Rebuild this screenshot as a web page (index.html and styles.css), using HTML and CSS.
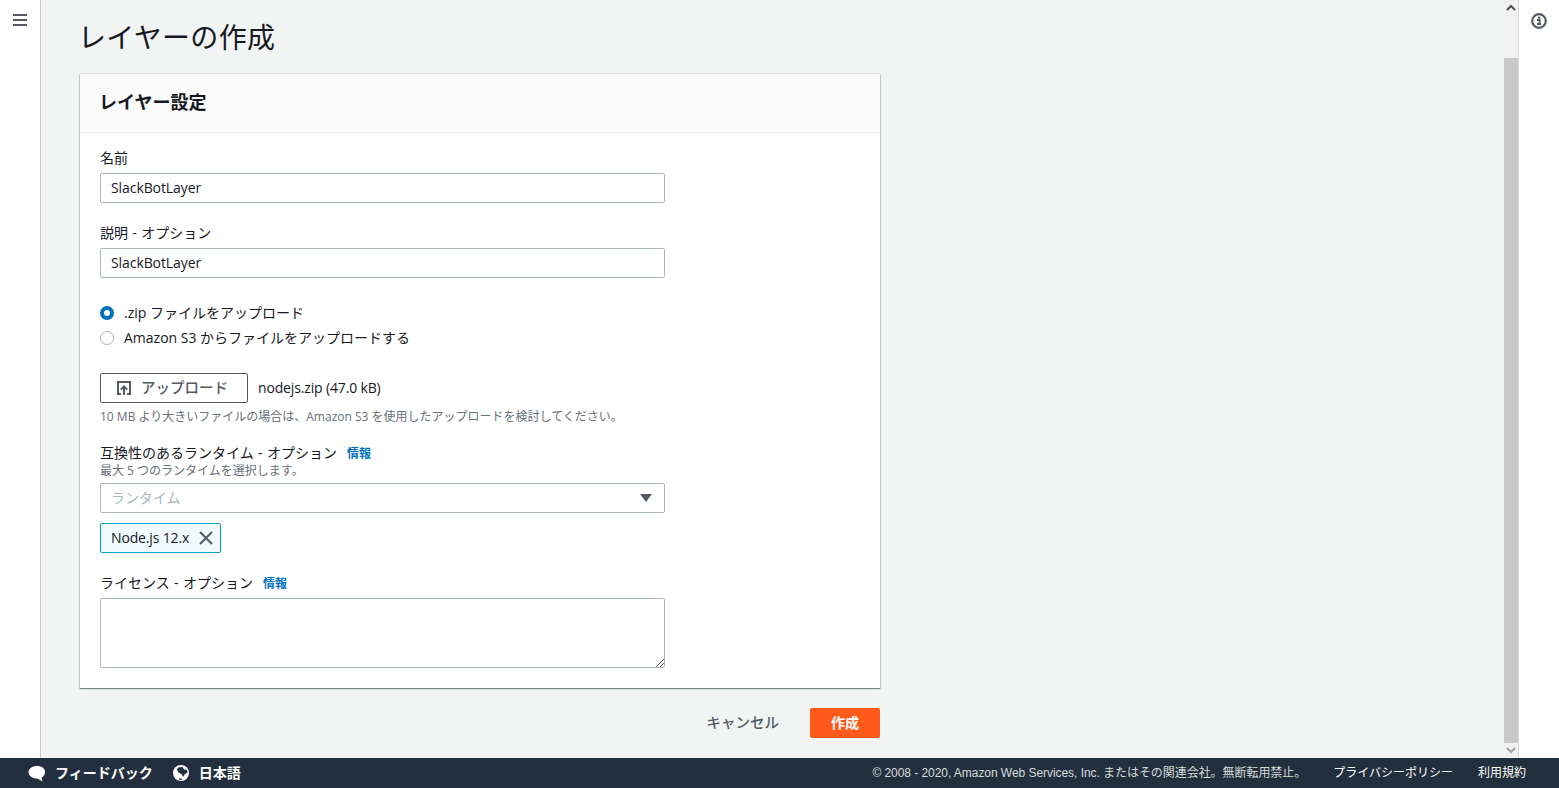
FILE: index.html
```html
<!DOCTYPE html>
<html lang="ja">
<head>
<meta charset="utf-8">
<title>レイヤーの作成</title>
<link rel="stylesheet" href="styles.css">
</head>
<body>
<div class="shell">
  <nav class="nav">
    <svg class="menu-icon" width="16" height="14" viewBox="0 0 16 14"><path d="M1 2h14M1 7h14M1 12h14" stroke="#545b64" stroke-width="2" fill="none"/></svg>
  </nav>
  <main class="main">
    <h1 class="title">レイヤーの作成</h1>
    <section class="card">
      <header class="card-head"><h2 class="card-title">レイヤー設定</h2></header>
      <div class="card-body">
        <div class="label">名前</div>
        <div class="input">SlackBotLayer</div>
        <div class="label label-next">説明 - オプション</div>
        <div class="input">SlackBotLayer</div>
        <div class="radios">
          <div class="radio-row"><span class="radio radio-on"></span><span>.zip ファイルをアップロード</span></div>
          <div class="radio-row"><span class="radio"></span><span>Amazon S3 からファイルをアップロードする</span></div>
        </div>
        <div class="upload-row">
          <div class="upload-btn">
            <svg width="16" height="16" viewBox="0 0 16 16"><path d="M5 14H2V2h12v12h-3" fill="none" stroke="#545b64" stroke-width="2"/><path d="M8 15V7M4.800 9.600 8 6.400l3.200 3.200" fill="none" stroke="#545b64" stroke-width="2"/></svg>
            <span class="upload-text">アップロード</span>
          </div>
          <span class="file-name">nodejs.zip (47.0 kB)</span>
        </div>
        <div class="hint">10 MB より大きいファイルの場合は、Amazon S3 を使用したアップロードを検討してください。</div>
        <div class="label label-runtime">互換性のあるランタイム - オプション<a class="info">情報</a></div>
        <div class="sub">最大 5 つのランタイムを選択します。</div>
        <div class="input select"><span class="placeholder">ランタイム</span><span class="caret"></span></div>
        <div class="token"><span class="token-text">Node.js 12.x</span>
          <svg width="16" height="16" viewBox="0 0 16 16"><path d="M2 2l12 12M14 2 2 14" stroke="#545b64" stroke-width="2" fill="none"/></svg>
        </div>
        <div class="label label-license">ライセンス - オプション<a class="info">情報</a></div>
        <div class="textarea">
          <svg class="grip" width="8" height="8" viewBox="0 0 8 8"><path d="M0 8 8 0M4 8l4-4" stroke="#555" stroke-width="1" fill="none"/></svg>
        </div>
      </div>
    </section>
    <div class="actions">
      <span class="cancel">キャンセル</span>
      <span class="create">作成</span>
    </div>
  </main>
  <div class="scrollbar">
    <div class="scroll-top"><svg width="10" height="7" viewBox="0 0 10 7"><path d="M1 6l4-4 4 4" stroke="#505050" stroke-width="2" fill="none"/></svg></div>
    <div class="thumb"></div>
    <div class="scroll-bottom"><svg width="10" height="7" viewBox="0 0 10 7"><path d="M1 1l4 4 4-4" stroke="#a3a3a3" stroke-width="2" fill="none"/></svg></div>
  </div>
  <aside class="aside">
    <svg width="16" height="16" viewBox="0 0 16 16"><circle cx="8" cy="8" r="6.800" fill="none" stroke="#545b64" stroke-width="2.200"/><path d="M6 7h2.600v3.400M6 11h4.200" fill="none" stroke="#545b64" stroke-width="1.800"/><rect x="7" y="3.600" width="2.200" height="2.200" fill="#545b64"/></svg>
  </aside>
</div>
<footer class="footer">
  <div class="foot-item foot-feedback">
    <svg width="18" height="17" viewBox="0 0 18 16"><path d="M9 .5C4.200.5.500 3.200.500 6.700c0 3.400 3.500 6.100 8 6.200 1.600 0 3 1 5 2.600.800.500 1.200.200.800-.600-.400-.900-.600-2-.500-3 2-1.200 3.200-3.100 3.200-5.200C17.500 3.200 13.800.5 9 .5z" fill="#fff"/></svg>
    <span>フィードバック</span>
  </div>
  <div class="foot-item foot-lang">
    <svg width="16" height="16" viewBox="0 0 16 16"><circle cx="8" cy="8" r="8" fill="#fff"/><path d="M5 2.500 9.500 2l1.500 2.500L14 4.800l.5 2.700-2.500 1.500-2 3-1.500-3-3-1.500-1.500-3zM6 13.500h3v1.200H6z" fill="#232f3e"/></svg>
    <span>日本語</span>
  </div>
  <span class="copyright">© 2008 - 2020, Amazon Web Services, Inc. またはその関連会社。無断転用禁止。</span>
  <span class="foot-link foot-privacy">プライバシーポリシー</span>
  <span class="foot-link foot-terms">利用規約</span>
</footer>
</body>
</html>
```
FILE: styles.css
```css
* { box-sizing: border-box; }
html, body { margin: 0; height: 100%; overflow: hidden; }
body {
  display: flex;
  flex-direction: column;
  width: 1559px;
  height: 788px;
  font-family: "Open Sans", "Noto Sans CJK JP", sans-serif;
  font-size: 14px;
  color: #16191f;
  background: #fff;
}
.shell { display: flex; height: 758px; }
.nav {
  width: 41px;
  flex: none;
  background: #fff;
  border-right: 1px solid #c4cccc;
  padding: 13px 0 0 12px;
}
.menu-icon { display: block; }
.main {
  flex: 1;
  background: #f2f3f3;
  padding: 0 0 0 39px;
  min-width: 0;
}
.title {
  margin: 0;
  height: 74px;
  padding: 16px 0 0 0;
  font-size: 28px;
  line-height: 42px;
  font-weight: 400;
  letter-spacing: .3px;
  text-indent: -2px;
  color: #16191f;
}
.card {
  width: 800px;
  height: 614px;
  background: #fff;
  box-shadow: 0 1px 1px 0 rgba(0,28,36,.3), 1px 1px 1px 0 rgba(0,28,36,.15), -1px 1px 1px 0 rgba(0,28,36,.15), 0 -1px 1px 0 rgba(0,28,36,.06);
}
.card-head {
  height: 59px;
  padding: 0 19px 2px;
  display: flex;
  align-items: center;
  background: #fafafa;
  border-bottom: 1px solid #eaeded;
}
.card-title { margin: 0; font-size: 18px; font-weight: 700; line-height: 24px; }
.card-body { padding: 14px 20px 0; }
.label { height: 22px; line-height: 22px; font-size: 14px; margin-bottom: 4px; word-spacing: .7px; }
.label-next { margin-top: 19px; }
.input {
  width: 565px;
  height: 30px;
  border: 1px solid #aab7b8;
  border-radius: 2px;
  padding: 0 10px;
  line-height: 28px;
  font-size: 14px;
  letter-spacing: -.08px;
  background: #fff;
}
.radios { margin-top: 23px; display: flex; flex-direction: column; gap: 3px; }
.radio-row { display: flex; align-items: center; gap: 10px; height: 22px; }
.radio {
  width: 14px;
  height: 14px;
  margin-top: 1px;
  border-radius: 50%;
  border: 1px solid #aab7b8;
  background: #fff;
}
.radio-on { border: 4px solid #0073bb; }
.upload-row { display: flex; align-items: center; gap: 10px; margin-top: 25px; }
.upload-btn {
  width: 148px;
  height: 30px;
  border: 1px solid #545b64;
  border-radius: 2px;
  background: #fff;
  display: flex;
  align-items: center;
  padding-left: 15px;
  gap: 9px;
  color: #545b64;
  font-weight: 500;
}
.upload-text { font-size: 14.500px; padding-bottom: 3px; }
.file-name { letter-spacing: -.15px; padding-bottom: 2px; }
.hint { margin-top: 4px; font-size: 12px; line-height: 20px; color: #687078; }
.label-runtime { margin-top: 15px; margin-bottom: 0; height: 22px; }
.sub { font-size: 12px; line-height: 14px; height: 14px; color: #687078; margin-bottom: 5px; }
.info { margin-left: 10px; color: #0073bb; font-size: 12px; font-weight: 700; }
.select { display: flex; align-items: center; justify-content: space-between; padding-right: 12px; }
.placeholder { color: #aab7b8; }
.caret {
  width: 0;
  height: 0;
  border-left: 6px solid transparent;
  border-right: 6px solid transparent;
  border-top: 8px solid #545b64;
}
.token {
  width: 121px;
  height: 30px;
  margin-top: 10px;
  border: 1px solid #00a1c9;
  border-radius: 2px;
  background: #f1faff;
  display: flex;
  align-items: center;
  justify-content: space-between;
  padding: 0 6px 0 10px;
}
.token-text { letter-spacing: -.15px; padding-bottom: 2px; }
.label-license { margin-top: 19px; margin-bottom: 4px; }
.textarea {
  position: relative;
  width: 565px;
  height: 70px;
  border: 1px solid #aab7b8;
  border-radius: 2px;
  background: #fff;
}
.grip { position: absolute; right: 0; bottom: 0; }
.actions {
  width: 800px;
  display: flex;
  align-items: center;
  justify-content: flex-end;
  gap: 31px;
  margin-top: 20px;
}
.cancel { color: #545b64; font-weight: 500; font-size: 14.500px; padding-bottom: 3px; }
.create {
  width: 70px;
  height: 30px;
  padding-bottom: 2px;
  background: #ff5a1a;
  border-radius: 2px;
  color: #fff;
  font-weight: 700;
  display: flex;
  align-items: center;
  justify-content: center;
}
.scrollbar {
  width: 15px;
  flex: none;
  background: #f1f1f1;
  border-right: 1px solid #d5dbdb;
  display: flex;
  flex-direction: column;
}
.scroll-top { height: 58px; display: flex; justify-content: center; align-items: flex-start; padding-top: 4px; }
.thumb { flex: 1; background: #c8c8c8; }
.scroll-bottom { height: 15px; display: flex; justify-content: center; align-items: center; }
.aside { width: 40px; flex: none; background: #fff; padding: 13px 0 0 12px; }
.footer {
  height: 30px;
  background: #232f3e;
  display: flex;
  align-items: center;
  color: #fff;
  font-size: 14px;
}
.foot-item { display: flex; align-items: center; font-weight: 700; }
.foot-item span { padding-bottom: 2px; }
.foot-feedback { margin-left: 28px; gap: 9px; }
.foot-lang { margin-left: 20px; gap: 10px; }
.copyright {
  margin-left: auto;
  margin-bottom: 3px;
  font-family: "Liberation Sans", "Noto Sans CJK JP", sans-serif;
  font-size: 12px;
  letter-spacing: -0.05px;
  color: #d5dbdb;
}
.foot-link { font-family: "Liberation Sans", "Noto Sans CJK JP", sans-serif; font-size: 12px; margin-bottom: 3px; }
.foot-privacy { margin-left: 27px; }
.foot-terms { margin-left: 25px; margin-right: 33px; }
```
